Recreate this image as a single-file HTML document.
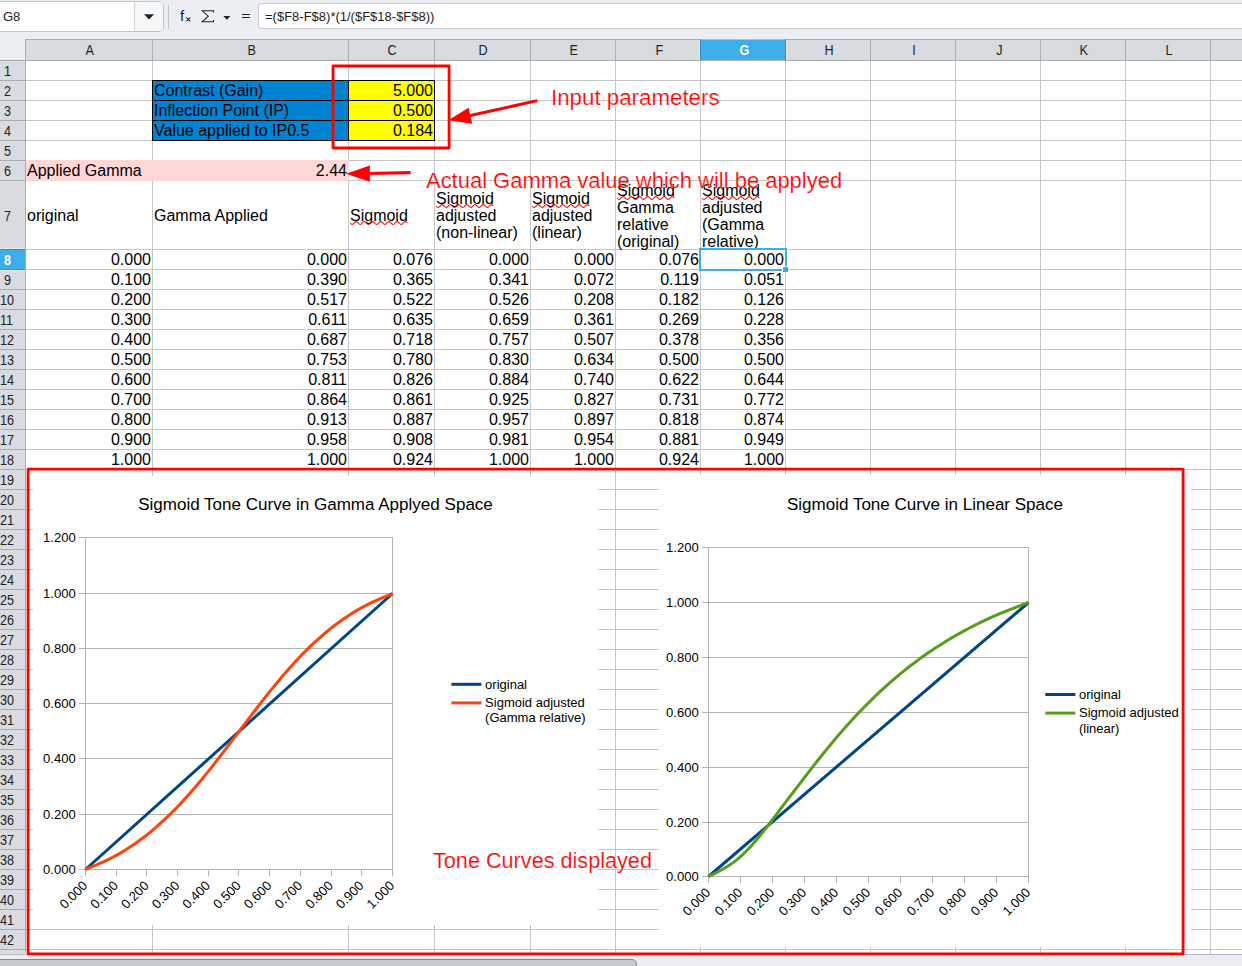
<!DOCTYPE html>
<html><head><meta charset="utf-8"><title>sheet</title>
<style>
html,body{margin:0;padding:0;}
body{width:1242px;height:966px;overflow:hidden;background:#fff;font-family:"Liberation Sans",sans-serif;position:relative;}
.abs{position:absolute;}
.t{position:absolute;white-space:nowrap;font-size:16px;line-height:20px;color:#000;}
.r{text-align:right;}
.hd{position:absolute;font-size:14px;line-height:20px;color:#222;text-align:center;}
.rh{position:absolute;font-size:14px;line-height:20px;color:#222;}
.red{position:absolute;white-space:nowrap;color:#ff0000;-webkit-text-stroke:0.2px #fff;font-size:22px;line-height:26px;}
.ax{position:absolute;white-space:nowrap;font-size:13.33px;line-height:15px;color:#000;}
.wavy{text-decoration:underline wavy #e8191c 1px;text-underline-offset:2px;}
</style></head><body>

<div class="abs" style="left:0;top:0;width:1242px;height:61px;background:#ebeef3"></div>
<div class="abs" style="left:-4px;top:1px;width:168px;height:31px;border:1px solid #c3c5ca;border-radius:5px;background:#fff;box-sizing:border-box"></div>
<div class="abs" style="left:134px;top:2px;width:29px;height:29px;border-left:1px solid #d0d2d6;background:#f6f7f9;border-radius:0 4px 4px 0;box-sizing:border-box"></div>
<div class="abs" style="left:3px;top:7px;font-size:13px;line-height:20px;color:#222">G8</div>
<svg class="abs" style="left:143px;top:12px" width="12" height="9"><path d="M1 2.2h10l-5 5.3z" fill="#222"/></svg>
<div class="abs" style="left:168px;top:5px;width:1px;height:24px;background:#c3c5ca"></div>
<div class="abs" style="left:180px;top:6px;font-size:15px;line-height:20px;color:#222">f</div>
<svg class="abs" style="left:185px;top:16px" width="7" height="7"><path d="M1.3 1.3l4 4M5.3 1.3l-4 4" stroke="#222" stroke-width="1.1" fill="none"/></svg>
<svg class="abs" style="left:200px;top:9px" width="16" height="14"><path d="M13.5 3.5v-1.7h-11.2l6 5.4l-6 5.5h11.2v-1.7" stroke="#222" stroke-width="1.1" fill="none"/></svg>
<svg class="abs" style="left:223px;top:15px" width="8" height="6"><path d="M0.3 1h7l-3.5 3.8z" fill="#222"/></svg>
<div class="abs" style="left:242px;top:14px;width:8px;height:1.2px;background:#222"></div><div class="abs" style="left:242px;top:17.3px;width:8px;height:1.2px;background:#222"></div>
<div class="abs" style="left:258px;top:3px;width:990px;height:26px;border:1px solid #c9cbd0;border-radius:3px;background:#fff;box-sizing:border-box"></div>
<div class="abs" style="left:265px;top:7px;font-size:13px;line-height:20px;color:#222;white-space:nowrap">=($F8-F$8)*(1/($F$18-$F$8))</div>
<div class="abs" style="left:25px;top:39px;width:1217px;height:22px;background:#a9acb1"></div>
<div class="hd" style="left:26px;top:40px;width:126px;height:20px;background:#d8dbe0;color:#222;padding-left:2px;box-sizing:border-box"><span style="display:inline-block;transform:scaleX(0.9)">A</span></div>
<div class="hd" style="left:153px;top:40px;width:195px;height:20px;background:#d8dbe0;color:#222;padding-left:2px;box-sizing:border-box"><span style="display:inline-block;transform:scaleX(0.9)">B</span></div>
<div class="hd" style="left:349px;top:40px;width:85px;height:20px;background:#d8dbe0;color:#222;padding-left:2px;box-sizing:border-box"><span style="display:inline-block;transform:scaleX(0.9)">C</span></div>
<div class="hd" style="left:435px;top:40px;width:95px;height:20px;background:#d8dbe0;color:#222;padding-left:2px;box-sizing:border-box"><span style="display:inline-block;transform:scaleX(0.9)">D</span></div>
<div class="hd" style="left:531px;top:40px;width:84px;height:20px;background:#d8dbe0;color:#222;padding-left:2px;box-sizing:border-box"><span style="display:inline-block;transform:scaleX(0.9)">E</span></div>
<div class="hd" style="left:616px;top:40px;width:84px;height:20px;background:#d8dbe0;color:#222;padding-left:2px;box-sizing:border-box"><span style="display:inline-block;transform:scaleX(0.9)">F</span></div>
<div class="hd" style="left:701px;top:40px;width:84px;height:20px;background:#3daee9;color:#fff;padding-left:2px;box-sizing:border-box;font-weight:bold"><span style="display:inline-block;transform:scaleX(0.9)">G</span></div>
<div class="hd" style="left:786px;top:40px;width:84px;height:20px;background:#d8dbe0;color:#222;padding-left:2px;box-sizing:border-box"><span style="display:inline-block;transform:scaleX(0.9)">H</span></div>
<div class="hd" style="left:871px;top:40px;width:84px;height:20px;background:#d8dbe0;color:#222;padding-left:2px;box-sizing:border-box"><span style="display:inline-block;transform:scaleX(0.9)">I</span></div>
<div class="hd" style="left:956px;top:40px;width:84px;height:20px;background:#d8dbe0;color:#222;padding-left:2px;box-sizing:border-box"><span style="display:inline-block;transform:scaleX(0.9)">J</span></div>
<div class="hd" style="left:1041px;top:40px;width:84px;height:20px;background:#d8dbe0;color:#222;padding-left:2px;box-sizing:border-box"><span style="display:inline-block;transform:scaleX(0.9)">K</span></div>
<div class="hd" style="left:1126px;top:40px;width:84px;height:20px;background:#d8dbe0;color:#222;padding-left:2px;box-sizing:border-box"><span style="display:inline-block;transform:scaleX(0.9)">L</span></div>
<div class="hd" style="left:1211px;top:40px;width:84px;height:20px;background:#d8dbe0;color:#222;padding-left:2px;box-sizing:border-box"><span style="display:inline-block;transform:scaleX(0.9)"></span></div>
<div class="abs" style="left:0;top:60px;width:26px;height:890px;background:#a9acb1"></div>
<div class="abs" style="left:0;top:950px;width:25px;height:4px;background:#d8dbe0"></div><div class="abs" style="left:25px;top:950px;width:1px;height:3px;background:#a9acb1"></div>
<div class="rh" style="left:0;top:61px;width:25px;height:19px;background:#d8dbe0;color:#222;line-height:21px"><span style="position:absolute;left:3.7px;transform:scaleX(0.9);transform-origin:0 50%">1</span></div>
<div class="rh" style="left:0;top:81px;width:25px;height:19px;background:#d8dbe0;color:#222;line-height:21px"><span style="position:absolute;left:3.7px;transform:scaleX(0.9);transform-origin:0 50%">2</span></div>
<div class="rh" style="left:0;top:101px;width:25px;height:19px;background:#d8dbe0;color:#222;line-height:21px"><span style="position:absolute;left:3.7px;transform:scaleX(0.9);transform-origin:0 50%">3</span></div>
<div class="rh" style="left:0;top:121px;width:25px;height:19px;background:#d8dbe0;color:#222;line-height:21px"><span style="position:absolute;left:3.7px;transform:scaleX(0.9);transform-origin:0 50%">4</span></div>
<div class="rh" style="left:0;top:141px;width:25px;height:19px;background:#d8dbe0;color:#222;line-height:21px"><span style="position:absolute;left:3.7px;transform:scaleX(0.9);transform-origin:0 50%">5</span></div>
<div class="rh" style="left:0;top:161px;width:25px;height:19px;background:#d8dbe0;color:#222;line-height:21px"><span style="position:absolute;left:3.7px;transform:scaleX(0.9);transform-origin:0 50%">6</span></div>
<div class="rh" style="left:0;top:181px;width:25px;height:68px;background:#d8dbe0;color:#222;line-height:70px"><span style="position:absolute;left:3.7px;transform:scaleX(0.9);transform-origin:0 50%">7</span></div>
<div class="rh" style="left:0;top:250px;width:25px;height:19px;background:#3daee9;color:#fff;line-height:21px"><span style="position:absolute;left:3.7px;transform:scaleX(0.9);transform-origin:0 50%;font-weight:bold">8</span></div>
<div class="rh" style="left:0;top:270px;width:25px;height:19px;background:#d8dbe0;color:#222;line-height:21px"><span style="position:absolute;left:3.7px;transform:scaleX(0.9);transform-origin:0 50%">9</span></div>
<div class="rh" style="left:0;top:290px;width:25px;height:19px;background:#d8dbe0;color:#222;line-height:21px"><span style="position:absolute;left:0px;transform:scaleX(0.9);transform-origin:0 50%">10</span></div>
<div class="rh" style="left:0;top:310px;width:25px;height:19px;background:#d8dbe0;color:#222;line-height:21px"><span style="position:absolute;left:0px;transform:scaleX(0.9);transform-origin:0 50%">11</span></div>
<div class="rh" style="left:0;top:330px;width:25px;height:19px;background:#d8dbe0;color:#222;line-height:21px"><span style="position:absolute;left:0px;transform:scaleX(0.9);transform-origin:0 50%">12</span></div>
<div class="rh" style="left:0;top:350px;width:25px;height:19px;background:#d8dbe0;color:#222;line-height:21px"><span style="position:absolute;left:0px;transform:scaleX(0.9);transform-origin:0 50%">13</span></div>
<div class="rh" style="left:0;top:370px;width:25px;height:19px;background:#d8dbe0;color:#222;line-height:21px"><span style="position:absolute;left:0px;transform:scaleX(0.9);transform-origin:0 50%">14</span></div>
<div class="rh" style="left:0;top:390px;width:25px;height:19px;background:#d8dbe0;color:#222;line-height:21px"><span style="position:absolute;left:0px;transform:scaleX(0.9);transform-origin:0 50%">15</span></div>
<div class="rh" style="left:0;top:410px;width:25px;height:19px;background:#d8dbe0;color:#222;line-height:21px"><span style="position:absolute;left:0px;transform:scaleX(0.9);transform-origin:0 50%">16</span></div>
<div class="rh" style="left:0;top:430px;width:25px;height:19px;background:#d8dbe0;color:#222;line-height:21px"><span style="position:absolute;left:0px;transform:scaleX(0.9);transform-origin:0 50%">17</span></div>
<div class="rh" style="left:0;top:450px;width:25px;height:19px;background:#d8dbe0;color:#222;line-height:21px"><span style="position:absolute;left:0px;transform:scaleX(0.9);transform-origin:0 50%">18</span></div>
<div class="rh" style="left:0;top:470px;width:25px;height:19px;background:#d8dbe0;color:#222;line-height:21px"><span style="position:absolute;left:0px;transform:scaleX(0.9);transform-origin:0 50%">19</span></div>
<div class="rh" style="left:0;top:490px;width:25px;height:19px;background:#d8dbe0;color:#222;line-height:21px"><span style="position:absolute;left:0px;transform:scaleX(0.9);transform-origin:0 50%">20</span></div>
<div class="rh" style="left:0;top:510px;width:25px;height:19px;background:#d8dbe0;color:#222;line-height:21px"><span style="position:absolute;left:0px;transform:scaleX(0.9);transform-origin:0 50%">21</span></div>
<div class="rh" style="left:0;top:530px;width:25px;height:19px;background:#d8dbe0;color:#222;line-height:21px"><span style="position:absolute;left:0px;transform:scaleX(0.9);transform-origin:0 50%">22</span></div>
<div class="rh" style="left:0;top:550px;width:25px;height:19px;background:#d8dbe0;color:#222;line-height:21px"><span style="position:absolute;left:0px;transform:scaleX(0.9);transform-origin:0 50%">23</span></div>
<div class="rh" style="left:0;top:570px;width:25px;height:19px;background:#d8dbe0;color:#222;line-height:21px"><span style="position:absolute;left:0px;transform:scaleX(0.9);transform-origin:0 50%">24</span></div>
<div class="rh" style="left:0;top:590px;width:25px;height:19px;background:#d8dbe0;color:#222;line-height:21px"><span style="position:absolute;left:0px;transform:scaleX(0.9);transform-origin:0 50%">25</span></div>
<div class="rh" style="left:0;top:610px;width:25px;height:19px;background:#d8dbe0;color:#222;line-height:21px"><span style="position:absolute;left:0px;transform:scaleX(0.9);transform-origin:0 50%">26</span></div>
<div class="rh" style="left:0;top:630px;width:25px;height:19px;background:#d8dbe0;color:#222;line-height:21px"><span style="position:absolute;left:0px;transform:scaleX(0.9);transform-origin:0 50%">27</span></div>
<div class="rh" style="left:0;top:650px;width:25px;height:19px;background:#d8dbe0;color:#222;line-height:21px"><span style="position:absolute;left:0px;transform:scaleX(0.9);transform-origin:0 50%">28</span></div>
<div class="rh" style="left:0;top:670px;width:25px;height:19px;background:#d8dbe0;color:#222;line-height:21px"><span style="position:absolute;left:0px;transform:scaleX(0.9);transform-origin:0 50%">29</span></div>
<div class="rh" style="left:0;top:690px;width:25px;height:19px;background:#d8dbe0;color:#222;line-height:21px"><span style="position:absolute;left:0px;transform:scaleX(0.9);transform-origin:0 50%">30</span></div>
<div class="rh" style="left:0;top:710px;width:25px;height:19px;background:#d8dbe0;color:#222;line-height:21px"><span style="position:absolute;left:0px;transform:scaleX(0.9);transform-origin:0 50%">31</span></div>
<div class="rh" style="left:0;top:730px;width:25px;height:19px;background:#d8dbe0;color:#222;line-height:21px"><span style="position:absolute;left:0px;transform:scaleX(0.9);transform-origin:0 50%">32</span></div>
<div class="rh" style="left:0;top:750px;width:25px;height:19px;background:#d8dbe0;color:#222;line-height:21px"><span style="position:absolute;left:0px;transform:scaleX(0.9);transform-origin:0 50%">33</span></div>
<div class="rh" style="left:0;top:770px;width:25px;height:19px;background:#d8dbe0;color:#222;line-height:21px"><span style="position:absolute;left:0px;transform:scaleX(0.9);transform-origin:0 50%">34</span></div>
<div class="rh" style="left:0;top:790px;width:25px;height:19px;background:#d8dbe0;color:#222;line-height:21px"><span style="position:absolute;left:0px;transform:scaleX(0.9);transform-origin:0 50%">35</span></div>
<div class="rh" style="left:0;top:810px;width:25px;height:19px;background:#d8dbe0;color:#222;line-height:21px"><span style="position:absolute;left:0px;transform:scaleX(0.9);transform-origin:0 50%">36</span></div>
<div class="rh" style="left:0;top:830px;width:25px;height:19px;background:#d8dbe0;color:#222;line-height:21px"><span style="position:absolute;left:0px;transform:scaleX(0.9);transform-origin:0 50%">37</span></div>
<div class="rh" style="left:0;top:850px;width:25px;height:19px;background:#d8dbe0;color:#222;line-height:21px"><span style="position:absolute;left:0px;transform:scaleX(0.9);transform-origin:0 50%">38</span></div>
<div class="rh" style="left:0;top:870px;width:25px;height:19px;background:#d8dbe0;color:#222;line-height:21px"><span style="position:absolute;left:0px;transform:scaleX(0.9);transform-origin:0 50%">39</span></div>
<div class="rh" style="left:0;top:890px;width:25px;height:19px;background:#d8dbe0;color:#222;line-height:21px"><span style="position:absolute;left:0px;transform:scaleX(0.9);transform-origin:0 50%">40</span></div>
<div class="rh" style="left:0;top:910px;width:25px;height:19px;background:#d8dbe0;color:#222;line-height:21px"><span style="position:absolute;left:0px;transform:scaleX(0.9);transform-origin:0 50%">41</span></div>
<div class="rh" style="left:0;top:930px;width:25px;height:19px;background:#d8dbe0;color:#222;line-height:21px"><span style="position:absolute;left:0px;transform:scaleX(0.9);transform-origin:0 50%">42</span></div>
<div class="abs" style="left:699px;top:40px;width:1px;height:20px;background:#e6e7ea"></div><div class="abs" style="left:786px;top:40px;width:1px;height:20px;background:#e6e7ea"></div>
<div class="abs" style="left:700px;top:39px;width:1px;height:21px;background:#2a93d0"></div><div class="abs" style="left:785px;top:39px;width:1px;height:21px;background:#2a93d0"></div>
<div class="abs" style="left:701px;top:39px;width:84px;height:1px;background:#c4b9b8"></div><div class="abs" style="left:701px;top:60px;width:84px;height:1px;background:#b5aeb0"></div>
<div class="abs" style="left:0;top:248px;width:25px;height:1px;background:#e6e7ea"></div><div class="abs" style="left:0;top:270px;width:25px;height:1px;background:#e6e7ea"></div>
<div class="abs" style="left:0;top:249px;width:25px;height:1px;background:#2a93d0"></div><div class="abs" style="left:0;top:269px;width:25px;height:1px;background:#2a93d0"></div>
<div class="abs" style="left:152px;top:61px;width:1px;height:893px;background:#c6c6c6"></div>
<div class="abs" style="left:348px;top:61px;width:1px;height:893px;background:#c6c6c6"></div>
<div class="abs" style="left:434px;top:61px;width:1px;height:893px;background:#c6c6c6"></div>
<div class="abs" style="left:530px;top:61px;width:1px;height:893px;background:#c6c6c6"></div>
<div class="abs" style="left:615px;top:61px;width:1px;height:893px;background:#c6c6c6"></div>
<div class="abs" style="left:700px;top:61px;width:1px;height:893px;background:#c6c6c6"></div>
<div class="abs" style="left:785px;top:61px;width:1px;height:893px;background:#c6c6c6"></div>
<div class="abs" style="left:870px;top:61px;width:1px;height:893px;background:#c6c6c6"></div>
<div class="abs" style="left:955px;top:61px;width:1px;height:893px;background:#c6c6c6"></div>
<div class="abs" style="left:1040px;top:61px;width:1px;height:893px;background:#c6c6c6"></div>
<div class="abs" style="left:1125px;top:61px;width:1px;height:893px;background:#c6c6c6"></div>
<div class="abs" style="left:1210px;top:61px;width:1px;height:893px;background:#c6c6c6"></div>
<div class="abs" style="left:26px;top:80px;width:1216px;height:1px;background:#c6c6c6"></div>
<div class="abs" style="left:26px;top:100px;width:1216px;height:1px;background:#c6c6c6"></div>
<div class="abs" style="left:26px;top:120px;width:1216px;height:1px;background:#c6c6c6"></div>
<div class="abs" style="left:26px;top:140px;width:1216px;height:1px;background:#c6c6c6"></div>
<div class="abs" style="left:26px;top:160px;width:1216px;height:1px;background:#c6c6c6"></div>
<div class="abs" style="left:26px;top:180px;width:1216px;height:1px;background:#c6c6c6"></div>
<div class="abs" style="left:26px;top:249px;width:1216px;height:1px;background:#c6c6c6"></div>
<div class="abs" style="left:26px;top:269px;width:1216px;height:1px;background:#c6c6c6"></div>
<div class="abs" style="left:26px;top:289px;width:1216px;height:1px;background:#c6c6c6"></div>
<div class="abs" style="left:26px;top:309px;width:1216px;height:1px;background:#c6c6c6"></div>
<div class="abs" style="left:26px;top:329px;width:1216px;height:1px;background:#c6c6c6"></div>
<div class="abs" style="left:26px;top:349px;width:1216px;height:1px;background:#c6c6c6"></div>
<div class="abs" style="left:26px;top:369px;width:1216px;height:1px;background:#c6c6c6"></div>
<div class="abs" style="left:26px;top:389px;width:1216px;height:1px;background:#c6c6c6"></div>
<div class="abs" style="left:26px;top:409px;width:1216px;height:1px;background:#c6c6c6"></div>
<div class="abs" style="left:26px;top:429px;width:1216px;height:1px;background:#c6c6c6"></div>
<div class="abs" style="left:26px;top:449px;width:1216px;height:1px;background:#c6c6c6"></div>
<div class="abs" style="left:26px;top:469px;width:1216px;height:1px;background:#c6c6c6"></div>
<div class="abs" style="left:26px;top:489px;width:1216px;height:1px;background:#c6c6c6"></div>
<div class="abs" style="left:26px;top:509px;width:1216px;height:1px;background:#c6c6c6"></div>
<div class="abs" style="left:26px;top:529px;width:1216px;height:1px;background:#c6c6c6"></div>
<div class="abs" style="left:26px;top:549px;width:1216px;height:1px;background:#c6c6c6"></div>
<div class="abs" style="left:26px;top:569px;width:1216px;height:1px;background:#c6c6c6"></div>
<div class="abs" style="left:26px;top:589px;width:1216px;height:1px;background:#c6c6c6"></div>
<div class="abs" style="left:26px;top:609px;width:1216px;height:1px;background:#c6c6c6"></div>
<div class="abs" style="left:26px;top:629px;width:1216px;height:1px;background:#c6c6c6"></div>
<div class="abs" style="left:26px;top:649px;width:1216px;height:1px;background:#c6c6c6"></div>
<div class="abs" style="left:26px;top:669px;width:1216px;height:1px;background:#c6c6c6"></div>
<div class="abs" style="left:26px;top:689px;width:1216px;height:1px;background:#c6c6c6"></div>
<div class="abs" style="left:26px;top:709px;width:1216px;height:1px;background:#c6c6c6"></div>
<div class="abs" style="left:26px;top:729px;width:1216px;height:1px;background:#c6c6c6"></div>
<div class="abs" style="left:26px;top:749px;width:1216px;height:1px;background:#c6c6c6"></div>
<div class="abs" style="left:26px;top:769px;width:1216px;height:1px;background:#c6c6c6"></div>
<div class="abs" style="left:26px;top:789px;width:1216px;height:1px;background:#c6c6c6"></div>
<div class="abs" style="left:26px;top:809px;width:1216px;height:1px;background:#c6c6c6"></div>
<div class="abs" style="left:26px;top:829px;width:1216px;height:1px;background:#c6c6c6"></div>
<div class="abs" style="left:26px;top:849px;width:1216px;height:1px;background:#c6c6c6"></div>
<div class="abs" style="left:26px;top:869px;width:1216px;height:1px;background:#c6c6c6"></div>
<div class="abs" style="left:26px;top:889px;width:1216px;height:1px;background:#c6c6c6"></div>
<div class="abs" style="left:26px;top:909px;width:1216px;height:1px;background:#c6c6c6"></div>
<div class="abs" style="left:26px;top:929px;width:1216px;height:1px;background:#c6c6c6"></div>
<div class="abs" style="left:26px;top:949px;width:1216px;height:1px;background:#c6c6c6"></div>
<div class="abs" style="left:26px;top:160px;width:323px;height:21px;background:#ffd7d7"></div>
<div class="abs" style="left:152px;top:80px;width:197px;height:61px;background:#0084d1"></div>
<div class="abs" style="left:348px;top:80px;width:87px;height:61px;background:#ffff00"></div>
<div class="abs" style="left:152px;top:80px;width:283px;height:1px;background:#000"></div>
<div class="abs" style="left:152px;top:100px;width:283px;height:1px;background:#000"></div>
<div class="abs" style="left:152px;top:120px;width:283px;height:1px;background:#000"></div>
<div class="abs" style="left:152px;top:140px;width:283px;height:1px;background:#000"></div>
<div class="abs" style="left:152px;top:80px;width:1px;height:61px;background:#000"></div>
<div class="abs" style="left:348px;top:80px;width:1px;height:61px;background:#000"></div>
<div class="abs" style="left:434px;top:80px;width:1px;height:61px;background:#000"></div>
<div class="t" style="left:154px;top:81px;">Contrast (Gain)</div>
<div class="t" style="left:154px;top:101px;">Inflection Point (IP)</div>
<div class="t" style="left:154px;top:121px;">Value applied to IP0.5</div>
<div class="t r" style="left:349px;top:81px;width:84px;">5.000</div>
<div class="t r" style="left:349px;top:101px;width:84px;">0.500</div>
<div class="t r" style="left:349px;top:121px;width:84px;">0.184</div>
<div class="t" style="left:27px;top:161px;">Applied Gamma</div>
<div class="t r" style="left:153px;top:161px;width:194px;">2.44</div>
<div class="t" style="left:27px;top:206.1px;line-height:20px">original</div>
<div class="t" style="left:154px;top:206.1px;line-height:20px">Gamma Applied</div>
<div class="t" style="left:350px;top:206.1px;line-height:20px">Sigmoid</div>
<svg class="abs" style="left:350px;top:220.3px" width="59" height="6"><path d="M0,3 q2.05,2.8 4.1,0 t4.1,0 t4.1,0 t4.1,0 t4.1,0 t4.1,0 t4.1,0 t4.1,0 t4.1,0 t4.1,0 t4.1,0 t4.1,0 t4.1,0 t4.1,0" fill="none" stroke="#ff0000" stroke-width="1.1"/></svg>
<div class="t" style="left:436px;top:189.0px;line-height:20px">Sigmoid</div>
<svg class="abs" style="left:436px;top:203.2px" width="59" height="6"><path d="M0,3 q2.05,2.8 4.1,0 t4.1,0 t4.1,0 t4.1,0 t4.1,0 t4.1,0 t4.1,0 t4.1,0 t4.1,0 t4.1,0 t4.1,0 t4.1,0 t4.1,0 t4.1,0" fill="none" stroke="#ff0000" stroke-width="1.1"/></svg>
<div class="t" style="left:436px;top:206.1px;line-height:20px">adjusted</div>
<div class="t" style="left:436px;top:223.2px;line-height:20px">(non-linear)</div>
<div class="t" style="left:532px;top:189.0px;line-height:20px">Sigmoid</div>
<svg class="abs" style="left:532px;top:203.2px" width="59" height="6"><path d="M0,3 q2.05,2.8 4.1,0 t4.1,0 t4.1,0 t4.1,0 t4.1,0 t4.1,0 t4.1,0 t4.1,0 t4.1,0 t4.1,0 t4.1,0 t4.1,0 t4.1,0 t4.1,0" fill="none" stroke="#ff0000" stroke-width="1.1"/></svg>
<div class="t" style="left:532px;top:206.1px;line-height:20px">adjusted</div>
<div class="t" style="left:532px;top:223.2px;line-height:20px">(linear)</div>
<div class="t" style="left:617px;top:180.9px;line-height:20px">Sigmoid</div>
<svg class="abs" style="left:617px;top:195.0px" width="59" height="6"><path d="M0,3 q2.05,2.8 4.1,0 t4.1,0 t4.1,0 t4.1,0 t4.1,0 t4.1,0 t4.1,0 t4.1,0 t4.1,0 t4.1,0 t4.1,0 t4.1,0 t4.1,0 t4.1,0" fill="none" stroke="#ff0000" stroke-width="1.1"/></svg>
<div class="t" style="left:617px;top:198.0px;line-height:20px">Gamma</div>
<div class="t" style="left:617px;top:215.1px;line-height:20px">relative</div>
<div class="t" style="left:617px;top:232.2px;line-height:20px">(original)</div>
<div class="t" style="left:702px;top:180.9px;line-height:20px">Sigmoid</div>
<svg class="abs" style="left:702px;top:195.0px" width="59" height="6"><path d="M0,3 q2.05,2.8 4.1,0 t4.1,0 t4.1,0 t4.1,0 t4.1,0 t4.1,0 t4.1,0 t4.1,0 t4.1,0 t4.1,0 t4.1,0 t4.1,0 t4.1,0 t4.1,0" fill="none" stroke="#ff0000" stroke-width="1.1"/></svg>
<div class="t" style="left:702px;top:198.0px;line-height:20px">adjusted</div>
<div class="t" style="left:702px;top:215.1px;line-height:20px">(Gamma</div>
<div class="t" style="left:702px;top:232.2px;line-height:20px">relative)</div>
<div class="t r" style="left:26px;top:250px;width:125px;">0.000</div>
<div class="t r" style="left:153px;top:250px;width:194px;">0.000</div>
<div class="t r" style="left:349px;top:250px;width:84px;">0.076</div>
<div class="t r" style="left:435px;top:250px;width:94px;">0.000</div>
<div class="t r" style="left:531px;top:250px;width:83px;">0.000</div>
<div class="t r" style="left:616px;top:250px;width:83px;">0.076</div>
<div class="t r" style="left:701px;top:250px;width:83px;">0.000</div>
<div class="t r" style="left:26px;top:270px;width:125px;">0.100</div>
<div class="t r" style="left:153px;top:270px;width:194px;">0.390</div>
<div class="t r" style="left:349px;top:270px;width:84px;">0.365</div>
<div class="t r" style="left:435px;top:270px;width:94px;">0.341</div>
<div class="t r" style="left:531px;top:270px;width:83px;">0.072</div>
<div class="t r" style="left:616px;top:270px;width:83px;">0.119</div>
<div class="t r" style="left:701px;top:270px;width:83px;">0.051</div>
<div class="t r" style="left:26px;top:290px;width:125px;">0.200</div>
<div class="t r" style="left:153px;top:290px;width:194px;">0.517</div>
<div class="t r" style="left:349px;top:290px;width:84px;">0.522</div>
<div class="t r" style="left:435px;top:290px;width:94px;">0.526</div>
<div class="t r" style="left:531px;top:290px;width:83px;">0.208</div>
<div class="t r" style="left:616px;top:290px;width:83px;">0.182</div>
<div class="t r" style="left:701px;top:290px;width:83px;">0.126</div>
<div class="t r" style="left:26px;top:310px;width:125px;">0.300</div>
<div class="t r" style="left:153px;top:310px;width:194px;">0.611</div>
<div class="t r" style="left:349px;top:310px;width:84px;">0.635</div>
<div class="t r" style="left:435px;top:310px;width:94px;">0.659</div>
<div class="t r" style="left:531px;top:310px;width:83px;">0.361</div>
<div class="t r" style="left:616px;top:310px;width:83px;">0.269</div>
<div class="t r" style="left:701px;top:310px;width:83px;">0.228</div>
<div class="t r" style="left:26px;top:330px;width:125px;">0.400</div>
<div class="t r" style="left:153px;top:330px;width:194px;">0.687</div>
<div class="t r" style="left:349px;top:330px;width:84px;">0.718</div>
<div class="t r" style="left:435px;top:330px;width:94px;">0.757</div>
<div class="t r" style="left:531px;top:330px;width:83px;">0.507</div>
<div class="t r" style="left:616px;top:330px;width:83px;">0.378</div>
<div class="t r" style="left:701px;top:330px;width:83px;">0.356</div>
<div class="t r" style="left:26px;top:350px;width:125px;">0.500</div>
<div class="t r" style="left:153px;top:350px;width:194px;">0.753</div>
<div class="t r" style="left:349px;top:350px;width:84px;">0.780</div>
<div class="t r" style="left:435px;top:350px;width:94px;">0.830</div>
<div class="t r" style="left:531px;top:350px;width:83px;">0.634</div>
<div class="t r" style="left:616px;top:350px;width:83px;">0.500</div>
<div class="t r" style="left:701px;top:350px;width:83px;">0.500</div>
<div class="t r" style="left:26px;top:370px;width:125px;">0.600</div>
<div class="t r" style="left:153px;top:370px;width:194px;">0.811</div>
<div class="t r" style="left:349px;top:370px;width:84px;">0.826</div>
<div class="t r" style="left:435px;top:370px;width:94px;">0.884</div>
<div class="t r" style="left:531px;top:370px;width:83px;">0.740</div>
<div class="t r" style="left:616px;top:370px;width:83px;">0.622</div>
<div class="t r" style="left:701px;top:370px;width:83px;">0.644</div>
<div class="t r" style="left:26px;top:390px;width:125px;">0.700</div>
<div class="t r" style="left:153px;top:390px;width:194px;">0.864</div>
<div class="t r" style="left:349px;top:390px;width:84px;">0.861</div>
<div class="t r" style="left:435px;top:390px;width:94px;">0.925</div>
<div class="t r" style="left:531px;top:390px;width:83px;">0.827</div>
<div class="t r" style="left:616px;top:390px;width:83px;">0.731</div>
<div class="t r" style="left:701px;top:390px;width:83px;">0.772</div>
<div class="t r" style="left:26px;top:410px;width:125px;">0.800</div>
<div class="t r" style="left:153px;top:410px;width:194px;">0.913</div>
<div class="t r" style="left:349px;top:410px;width:84px;">0.887</div>
<div class="t r" style="left:435px;top:410px;width:94px;">0.957</div>
<div class="t r" style="left:531px;top:410px;width:83px;">0.897</div>
<div class="t r" style="left:616px;top:410px;width:83px;">0.818</div>
<div class="t r" style="left:701px;top:410px;width:83px;">0.874</div>
<div class="t r" style="left:26px;top:430px;width:125px;">0.900</div>
<div class="t r" style="left:153px;top:430px;width:194px;">0.958</div>
<div class="t r" style="left:349px;top:430px;width:84px;">0.908</div>
<div class="t r" style="left:435px;top:430px;width:94px;">0.981</div>
<div class="t r" style="left:531px;top:430px;width:83px;">0.954</div>
<div class="t r" style="left:616px;top:430px;width:83px;">0.881</div>
<div class="t r" style="left:701px;top:430px;width:83px;">0.949</div>
<div class="t r" style="left:26px;top:450px;width:125px;">1.000</div>
<div class="t r" style="left:153px;top:450px;width:194px;">1.000</div>
<div class="t r" style="left:349px;top:450px;width:84px;">0.924</div>
<div class="t r" style="left:435px;top:450px;width:94px;">1.000</div>
<div class="t r" style="left:531px;top:450px;width:83px;">1.000</div>
<div class="t r" style="left:616px;top:450px;width:83px;">0.924</div>
<div class="t r" style="left:701px;top:450px;width:83px;">1.000</div>
<div class="abs" style="left:699px;top:248px;width:88px;height:23px;border:2px solid #3daee9;box-sizing:border-box"></div>
<div class="abs" style="left:782px;top:266px;width:6px;height:6px;background:#fff"></div>
<div class="abs" style="left:783px;top:267px;width:5px;height:5px;background:#3daee9"></div>
<svg class="abs" style="left:33px;top:476px" width="565" height="449" viewBox="33 476 565 449" font-family="Liberation Sans, sans-serif">
<rect x="33" y="476" width="565" height="449" fill="#fff"/>
<text x="315.5" y="510.2" font-size="17.05" text-anchor="middle" fill="#000">Sigmoid Tone Curve in Gamma Applyed Space</text>
<line x1="79" y1="869.5" x2="393" y2="869.5" stroke="#b3b3b3" stroke-width="1"/>
<text x="75.8" y="874.1" font-size="13.07" text-anchor="end" fill="#000">0.000</text>
<line x1="79" y1="814.5" x2="393" y2="814.5" stroke="#b3b3b3" stroke-width="1"/>
<text x="75.8" y="819.1" font-size="13.07" text-anchor="end" fill="#000">0.200</text>
<line x1="79" y1="758.5" x2="393" y2="758.5" stroke="#b3b3b3" stroke-width="1"/>
<text x="75.8" y="763.1" font-size="13.07" text-anchor="end" fill="#000">0.400</text>
<line x1="79" y1="703.5" x2="393" y2="703.5" stroke="#b3b3b3" stroke-width="1"/>
<text x="75.8" y="708.1" font-size="13.07" text-anchor="end" fill="#000">0.600</text>
<line x1="79" y1="648.5" x2="393" y2="648.5" stroke="#b3b3b3" stroke-width="1"/>
<text x="75.8" y="653.1" font-size="13.07" text-anchor="end" fill="#000">0.800</text>
<line x1="79" y1="593.5" x2="393" y2="593.5" stroke="#b3b3b3" stroke-width="1"/>
<text x="75.8" y="598.1" font-size="13.07" text-anchor="end" fill="#000">1.000</text>
<line x1="79" y1="537.5" x2="393" y2="537.5" stroke="#b3b3b3" stroke-width="1"/>
<text x="75.8" y="542.1" font-size="13.07" text-anchor="end" fill="#000">1.200</text>
<line x1="85.5" y1="537" x2="85.5" y2="876" stroke="#b3b3b3" stroke-width="1"/>
<line x1="392.5" y1="537" x2="392.5" y2="876" stroke="#b3b3b3" stroke-width="1"/>
<text transform="translate(84.8,883) rotate(-45)" x="0" y="4.77" font-size="13.07" text-anchor="end" fill="#000">0.000</text>
<line x1="116.5" y1="869" x2="116.5" y2="876" stroke="#b3b3b3" stroke-width="1"/>
<text transform="translate(115.5,883) rotate(-45)" x="0" y="4.77" font-size="13.07" text-anchor="end" fill="#000">0.100</text>
<line x1="146.5" y1="869" x2="146.5" y2="876" stroke="#b3b3b3" stroke-width="1"/>
<text transform="translate(146.2,883) rotate(-45)" x="0" y="4.77" font-size="13.07" text-anchor="end" fill="#000">0.200</text>
<line x1="177.5" y1="869" x2="177.5" y2="876" stroke="#b3b3b3" stroke-width="1"/>
<text transform="translate(176.9,883) rotate(-45)" x="0" y="4.77" font-size="13.07" text-anchor="end" fill="#000">0.300</text>
<line x1="208.5" y1="869" x2="208.5" y2="876" stroke="#b3b3b3" stroke-width="1"/>
<text transform="translate(207.6,883) rotate(-45)" x="0" y="4.77" font-size="13.07" text-anchor="end" fill="#000">0.400</text>
<line x1="238.5" y1="869" x2="238.5" y2="876" stroke="#b3b3b3" stroke-width="1"/>
<text transform="translate(238.3,883) rotate(-45)" x="0" y="4.77" font-size="13.07" text-anchor="end" fill="#000">0.500</text>
<line x1="269.5" y1="869" x2="269.5" y2="876" stroke="#b3b3b3" stroke-width="1"/>
<text transform="translate(269.0,883) rotate(-45)" x="0" y="4.77" font-size="13.07" text-anchor="end" fill="#000">0.600</text>
<line x1="300.5" y1="869" x2="300.5" y2="876" stroke="#b3b3b3" stroke-width="1"/>
<text transform="translate(299.7,883) rotate(-45)" x="0" y="4.77" font-size="13.07" text-anchor="end" fill="#000">0.700</text>
<line x1="331.5" y1="869" x2="331.5" y2="876" stroke="#b3b3b3" stroke-width="1"/>
<text transform="translate(330.4,883) rotate(-45)" x="0" y="4.77" font-size="13.07" text-anchor="end" fill="#000">0.800</text>
<line x1="361.5" y1="869" x2="361.5" y2="876" stroke="#b3b3b3" stroke-width="1"/>
<text transform="translate(361.1,883) rotate(-45)" x="0" y="4.77" font-size="13.07" text-anchor="end" fill="#000">0.900</text>
<text transform="translate(391.8,883) rotate(-45)" x="0" y="4.77" font-size="13.07" text-anchor="end" fill="#000">1.000</text>
<line x1="85.50" y1="869.50" x2="392.50" y2="593.50" stroke="#004586" stroke-width="3" stroke-linecap="butt"/>
<polyline points="85.50,869.50 88.57,868.22 91.64,866.93 94.71,865.63 97.78,864.30 100.85,862.94 103.92,861.54 106.99,860.09 110.06,858.59 113.13,857.03 116.20,855.40 119.27,853.69 122.34,851.90 125.41,850.03 128.48,848.09 131.55,846.07 134.62,843.97 137.69,841.80 140.76,839.55 143.83,837.23 146.90,834.83 149.97,832.35 153.04,829.80 156.11,827.18 159.18,824.48 162.25,821.70 165.32,818.85 168.39,815.92 171.46,812.92 174.53,809.84 177.60,806.68 180.67,803.44 183.74,800.14 186.81,796.76 189.88,793.31 192.95,789.79 196.02,786.22 199.09,782.58 202.16,778.89 205.23,775.14 208.30,771.34 211.37,767.50 214.44,763.61 217.51,759.68 220.58,755.72 223.65,751.72 226.72,747.71 229.79,743.67 232.86,739.62 235.93,735.56 239.00,731.50 242.07,727.44 245.14,723.38 248.21,719.33 251.28,715.29 254.35,711.28 257.42,707.28 260.49,703.32 263.56,699.39 266.63,695.50 269.70,691.66 272.77,687.86 275.84,684.11 278.91,680.42 281.98,676.78 285.05,673.21 288.12,669.69 291.19,666.24 294.26,662.86 297.33,659.56 300.40,656.32 303.47,653.16 306.54,650.08 309.61,647.08 312.68,644.15 315.75,641.30 318.82,638.52 321.89,635.82 324.96,633.20 328.03,630.65 331.10,628.17 334.17,625.77 337.24,623.45 340.31,621.20 343.38,619.03 346.45,616.93 349.52,614.91 352.59,612.97 355.66,611.10 358.73,609.31 361.80,607.60 364.87,605.97 367.94,604.41 371.01,602.91 374.08,601.46 377.15,600.06 380.22,598.70 383.29,597.37 386.36,596.07 389.43,594.78 392.50,593.50" fill="none" stroke="#ff420e" stroke-width="3" stroke-linejoin="round"/>
<line x1="451.4" y1="684.3" x2="481.4" y2="684.3" stroke="#004586" stroke-width="3"/>
<text x="485.09999999999997"  y="688.5" font-size="13.0" fill="#000">original</text>
<line x1="451.4" y1="702.9" x2="481.4" y2="702.9" stroke="#ff420e" stroke-width="3"/>
<text x="485.09999999999997"  y="707.1" font-size="13.0" fill="#000">Sigmoid adjusted</text>
<text x="485.09999999999997"  y="722.4" font-size="13.0" fill="#000">(Gamma relative)</text>
</svg>
<svg class="abs" style="left:659px;top:475px" width="532" height="472" viewBox="659 475 532 472" font-family="Liberation Sans, sans-serif">
<rect x="659" y="475" width="532" height="472" fill="#fff"/>
<text x="925.0" y="510" font-size="17.05" text-anchor="middle" fill="#000">Sigmoid Tone Curve in Linear Space</text>
<line x1="702" y1="876.5" x2="1029" y2="876.5" stroke="#b3b3b3" stroke-width="1"/>
<text x="698.8" y="881.1" font-size="13.07" text-anchor="end" fill="#000">0.000</text>
<line x1="702" y1="822.5" x2="1029" y2="822.5" stroke="#b3b3b3" stroke-width="1"/>
<text x="698.8" y="827.1" font-size="13.07" text-anchor="end" fill="#000">0.200</text>
<line x1="702" y1="767.5" x2="1029" y2="767.5" stroke="#b3b3b3" stroke-width="1"/>
<text x="698.8" y="772.1" font-size="13.07" text-anchor="end" fill="#000">0.400</text>
<line x1="702" y1="712.5" x2="1029" y2="712.5" stroke="#b3b3b3" stroke-width="1"/>
<text x="698.8" y="717.1" font-size="13.07" text-anchor="end" fill="#000">0.600</text>
<line x1="702" y1="657.5" x2="1029" y2="657.5" stroke="#b3b3b3" stroke-width="1"/>
<text x="698.8" y="662.1" font-size="13.07" text-anchor="end" fill="#000">0.800</text>
<line x1="702" y1="602.5" x2="1029" y2="602.5" stroke="#b3b3b3" stroke-width="1"/>
<text x="698.8" y="607.1" font-size="13.07" text-anchor="end" fill="#000">1.000</text>
<line x1="702" y1="547.5" x2="1029" y2="547.5" stroke="#b3b3b3" stroke-width="1"/>
<text x="698.8" y="552.1" font-size="13.07" text-anchor="end" fill="#000">1.200</text>
<line x1="708.5" y1="547" x2="708.5" y2="883" stroke="#b3b3b3" stroke-width="1"/>
<line x1="1028.5" y1="547" x2="1028.5" y2="883" stroke="#b3b3b3" stroke-width="1"/>
<text transform="translate(707.8,890) rotate(-45)" x="0" y="4.77" font-size="13.07" text-anchor="end" fill="#000">0.000</text>
<line x1="740.5" y1="876" x2="740.5" y2="883" stroke="#b3b3b3" stroke-width="1"/>
<text transform="translate(739.8,890) rotate(-45)" x="0" y="4.77" font-size="13.07" text-anchor="end" fill="#000">0.100</text>
<line x1="772.5" y1="876" x2="772.5" y2="883" stroke="#b3b3b3" stroke-width="1"/>
<text transform="translate(771.8,890) rotate(-45)" x="0" y="4.77" font-size="13.07" text-anchor="end" fill="#000">0.200</text>
<line x1="804.5" y1="876" x2="804.5" y2="883" stroke="#b3b3b3" stroke-width="1"/>
<text transform="translate(803.8,890) rotate(-45)" x="0" y="4.77" font-size="13.07" text-anchor="end" fill="#000">0.300</text>
<line x1="836.5" y1="876" x2="836.5" y2="883" stroke="#b3b3b3" stroke-width="1"/>
<text transform="translate(835.8,890) rotate(-45)" x="0" y="4.77" font-size="13.07" text-anchor="end" fill="#000">0.400</text>
<line x1="868.5" y1="876" x2="868.5" y2="883" stroke="#b3b3b3" stroke-width="1"/>
<text transform="translate(867.8,890) rotate(-45)" x="0" y="4.77" font-size="13.07" text-anchor="end" fill="#000">0.500</text>
<line x1="900.5" y1="876" x2="900.5" y2="883" stroke="#b3b3b3" stroke-width="1"/>
<text transform="translate(899.8,890) rotate(-45)" x="0" y="4.77" font-size="13.07" text-anchor="end" fill="#000">0.600</text>
<line x1="932.5" y1="876" x2="932.5" y2="883" stroke="#b3b3b3" stroke-width="1"/>
<text transform="translate(931.8,890) rotate(-45)" x="0" y="4.77" font-size="13.07" text-anchor="end" fill="#000">0.700</text>
<line x1="964.5" y1="876" x2="964.5" y2="883" stroke="#b3b3b3" stroke-width="1"/>
<text transform="translate(963.8,890) rotate(-45)" x="0" y="4.77" font-size="13.07" text-anchor="end" fill="#000">0.800</text>
<line x1="996.5" y1="876" x2="996.5" y2="883" stroke="#b3b3b3" stroke-width="1"/>
<text transform="translate(995.8,890) rotate(-45)" x="0" y="4.77" font-size="13.07" text-anchor="end" fill="#000">0.900</text>
<text transform="translate(1027.8,890) rotate(-45)" x="0" y="4.77" font-size="13.07" text-anchor="end" fill="#000">1.000</text>
<line x1="708.50" y1="876.50" x2="1028.50" y2="602.50" stroke="#004586" stroke-width="3" stroke-linecap="butt"/>
<polyline points="708.50,876.50 711.70,874.94 714.90,873.35 718.10,871.71 721.30,870.00 724.50,868.18 727.70,866.23 730.90,864.14 734.10,861.86 737.30,859.38 740.50,856.67 743.70,853.71 746.90,850.52 750.10,847.13 753.30,843.55 756.50,839.81 759.70,835.93 762.90,831.95 766.10,827.87 769.30,823.73 772.50,819.55 775.70,815.35 778.90,811.14 782.10,806.92 785.30,802.70 788.50,798.47 791.70,794.25 794.90,790.03 798.10,785.83 801.30,781.64 804.50,777.47 807.70,773.32 810.90,769.19 814.10,765.10 817.30,761.04 820.50,757.01 823.70,753.02 826.90,749.08 830.10,745.18 833.30,741.34 836.50,737.54 839.70,733.81 842.90,730.13 846.10,726.50 849.30,722.94 852.50,719.43 855.70,715.98 858.90,712.58 862.10,709.25 865.30,705.97 868.50,702.75 871.70,699.59 874.90,696.49 878.10,693.44 881.30,690.45 884.50,687.52 887.70,684.64 890.90,681.82 894.10,679.06 897.30,676.35 900.50,673.69 903.70,671.08 906.90,668.53 910.10,666.03 913.30,663.59 916.50,661.19 919.70,658.84 922.90,656.54 926.10,654.29 929.30,652.08 932.50,649.92 935.70,647.81 938.90,645.74 942.10,643.71 945.30,641.73 948.50,639.79 951.70,637.89 954.90,636.02 958.10,634.20 961.30,632.41 964.50,630.66 967.70,628.95 970.90,627.27 974.10,625.62 977.30,624.01 980.50,622.44 983.70,620.90 986.90,619.39 990.10,617.93 993.30,616.49 996.50,615.10 999.70,613.73 1002.90,612.41 1006.10,611.10 1009.30,609.83 1012.50,608.57 1015.70,607.34 1018.90,606.12 1022.10,604.90 1025.30,603.70 1028.50,602.50" fill="none" stroke="#579d1c" stroke-width="3" stroke-linejoin="round"/>
<line x1="1045.3" y1="694.5" x2="1075.3" y2="694.5" stroke="#004586" stroke-width="3"/>
<text x="1079.0"  y="698.7" font-size="13.0" fill="#000">original</text>
<line x1="1045.3" y1="713.1" x2="1075.3" y2="713.1" stroke="#579d1c" stroke-width="3"/>
<text x="1079.0"  y="717.3" font-size="13.0" fill="#000">Sigmoid adjusted</text>
<text x="1079.0"  y="732.6" font-size="13.0" fill="#000">(linear)</text>
</svg>
<div class="abs" style="left:0;top:955px;width:1242px;height:11px;background:#ebedf2"></div>
<div class="abs" style="left:0;top:954px;width:1242px;height:1px;background:#b4b7bc"></div>
<div class="abs" style="left:-10px;top:959px;width:647px;height:14px;background:#c6c9ce;border:1px solid #86898e;border-radius:5px;box-sizing:border-box"></div>
<svg class="abs" style="left:0;top:0" width="1242" height="966" viewBox="0 0 1242 966">
<rect x="333.05" y="66" width="116.05" height="82" fill="none" stroke="#ff0000" stroke-width="2.8" stroke-linejoin="round"/>
<rect x="28.1" y="469.05" width="1155" height="484.85" fill="none" stroke="#ff0000" stroke-width="2.8" stroke-linejoin="round"/>
<line x1="537.3" y1="100.6" x2="468" y2="116" stroke="#ff0000" stroke-width="3"/>
<polygon points="448.3,120.3 468.6,107.8 472.2,123.7" fill="#ff0000"/>
<line x1="410.6" y1="172.7" x2="368" y2="173.5" stroke="#ff0000" stroke-width="3.2"/>
<polygon points="346.2,173.8 369.9,165.5 369.9,181.8" fill="#ff0000"/>
</svg>
<div class="red" style="left:551px;top:85px;font-size:22.3px">Input parameters</div>
<div class="red" style="left:426px;top:168px;font-size:21.96px">Actual Gamma value which will be applyed</div>
<div class="red" style="left:433px;top:848px;font-size:21.65px">Tone Curves displayed</div>
</body></html>
